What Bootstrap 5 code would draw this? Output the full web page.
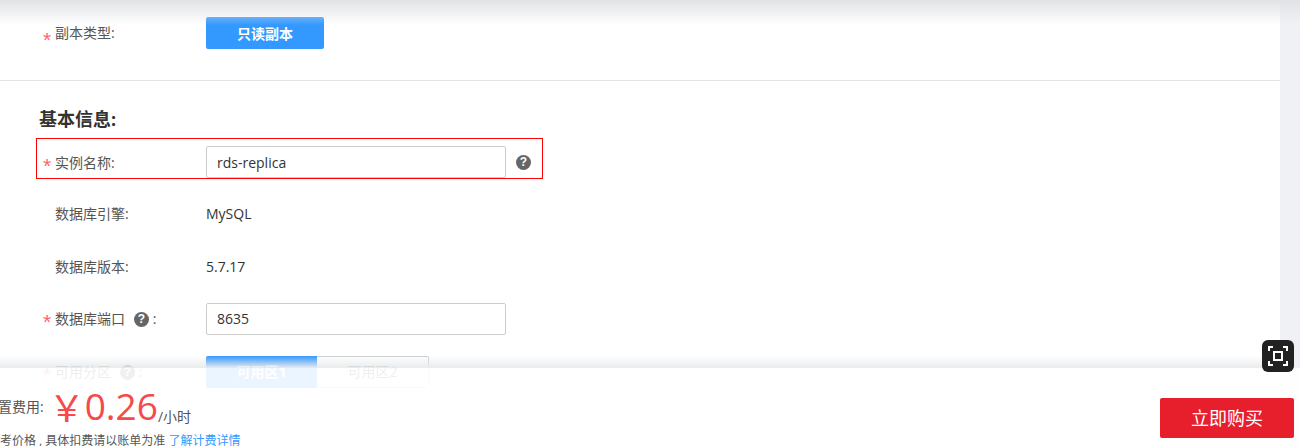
<!DOCTYPE html>
<html lang="zh-CN">

<head>
    <meta charset="UTF-8">
    <meta name="viewport" content="width=device-width, initial-scale=1.0">
    <title>只读副本</title>
    <link href="https://cdn.jsdelivr.net/npm/bootstrap@5.3.3/dist/css/bootstrap.min.css" rel="stylesheet">
    <style>
        html, body { height: 446px; overflow: hidden; }
        body { background: #f0f1f4; font-family: "Open Sans", "Noto Sans CJK SC", sans-serif; font-size: 14px; color: #555; position: relative; }
        .sheet { width: 1280px; height: 446px; background: #fff; }
        .top-fade { position: absolute; left: 0; right: 0; top: 0; height: 25px; background: linear-gradient(#e0e3e5, rgba(240, 241, 244, 0)); }
        .form-line { display: flex; align-items: center; padding-left: 43px; }
        .req { color: #f66; width: 13px; margin-right: -1px; flex: none; font: 21px/20px "Liberation Sans", sans-serif; padding-top: 7px; }
        .lbl { width: 151px; flex: none; color: #555; font-size: 14px; }
        .gap-after { margin-right: 9px; }
        .type-line { padding-top: 17px; height: 81px; align-items: flex-start; border-bottom: 1px solid #e3e3e3; }
        .type-line .req { padding-top: 13px; }
        .type-line .lbl { line-height: 32px; }
        .blue-btn { width: 118px; height: 32px; background: #39f; border: 0; border-radius: 2px; color: #fff; font-weight: 700; font-size: 14px; padding: 0; }
        .heading { font-size: 18px; font-weight: 700; color: #333; margin: 0; padding: 26px 0 0 39px; line-height: 24px; }
        .name-line { margin: 7px 0 0 36px; width: 507px; height: 41px; border: 1px solid #f00; padding: 7px 0 0 6px; }
        .txt-input { width: 300px; height: 32px; border: 1px solid #ccc; border-radius: 2px; padding: 0 10px; font-size: 14px; color: #333; background: #fff; }
        .help { width: 15px; height: 15px; border-radius: 50%; background: #666; color: #fff; font: 700 12px/15px "Liberation Sans", sans-serif; text-align: center; display: inline-block; flex: none; vertical-align: 1px; }
        .help-side { margin-left: 10px; }
        .plain-line { height: 52.8px; }
        .first-line { margin-top: 8px; }
        .val { color: #333; }
        .zone { display: flex; width: 223px; height: 32px; }
        .zone-on { width: 111px; background: #39f; color: #fff; font-weight: 700; text-align: center; line-height: 32px; border-radius: 2px 0 0 2px; }
        .zone-off { width: 112px; border: 1px solid #ccc; border-left: 0; color: #555; text-align: center; line-height: 30px; border-radius: 0 2px 2px 0; }
        .foot { position: absolute; left: 0; right: 0; top: 368px; height: 78px; background: rgba(255, 255, 255, .9); }
        .foot-fade { position: absolute; left: 0; right: 20px; top: 356px; height: 12px; background: linear-gradient(rgba(240, 241, 244, 0), #e9ebed); }
        .fee-row { position: absolute; left: -16px; top: 13px; display: flex; white-space: nowrap; }
        .fee-lbl { font-size: 14px; line-height: 20px; color: #555; padding-top: 16px; }
        .yen { font-size: 36px; line-height: 50px; color: #f44a4a; margin-left: 5px; font-family: "Noto Sans CJK SC", sans-serif; }
        .price { font-size: 37px; line-height: 50px; color: #f44a4a; }
        .per { font-size: 14px; line-height: 20px; color: #555; padding-top: 26px; }
        .note { position: absolute; left: -12px; top: 64px; font-size: 12px; line-height: 18px; color: #555; white-space: nowrap; }
        .note a { color: #39f; text-decoration: none; }
        .buy { position: absolute; left: 1160px; top: 30px; width: 134px; height: 40px; background: #e71f2d; color: #fff; border: 0; border-radius: 2px; font-size: 18px; padding: 0; }
        .shot { position: absolute; left: 1262px; top: 340px; width: 32px; height: 32px; border-radius: 6px; background: #222; display: flex; align-items: center; justify-content: center; }
    </style>
</head>

<body>
    <div class="sheet">
        <div class="form-line type-line">
            <span class="req">*</span>
            <span class="lbl">副本类型:</span>
            <button class="blue-btn" type="button">只读副本</button>
        </div>
        <h5 class="heading">基本信息:</h5>
        <div class="form-line name-line">
            <span class="req">*</span>
            <span class="lbl">实例名称:</span>
            <input class="txt-input" type="text" value="rds-replica">
            <span class="help help-side">?</span>
        </div>
        <div class="form-line plain-line first-line">
            <span class="req"></span>
            <span class="lbl">数据库引擎:</span>
            <span class="val">MySQL</span>
        </div>
        <div class="form-line plain-line">
            <span class="req"></span>
            <span class="lbl">数据库版本:</span>
            <span class="val">5.7.17</span>
        </div>
        <div class="form-line plain-line">
            <span class="req">*</span>
            <span class="lbl"><span class="gap-after">数据库端口</span><span class="help">?</span> :</span>
            <input class="txt-input" type="text" value="8635">
        </div>
        <div class="form-line plain-line">
            <span class="req">*</span>
            <span class="lbl"><span class="gap-after">可用分区</span><span class="help">?</span> :</span>
            <div class="zone">
                <div class="zone-on">可用区1</div>
                <div class="zone-off">可用区2</div>
            </div>
        </div>
    </div>
    <div class="top-fade"></div>
    <div class="foot-fade"></div>
    <div class="foot">
        <div class="fee-row">
            <span class="fee-lbl">配置费用:</span>
            <span class="yen">￥</span>
            <span class="price">0.26</span>
            <span class="per">/小时</span>
        </div>
        <div class="note">参考价格 , 具体扣费请以账单为准 <a href="#">了解计费详情</a></div>
        <button class="buy" type="button">立即购买</button>
    </div>
    <div class="shot">
        <svg width="22" height="22" viewBox="0 0 22 22" fill="none" stroke="#fff" stroke-width="2">
            <path d="M2 6V2h4M16 2h4v4M20 16v4h-4M6 20H2v-4"/>
            <rect x="7" y="7" width="8" height="8"/>
        </svg>
    </div>
    <script src="https://cdn.jsdelivr.net/npm/bootstrap@5.3.3/dist/js/bootstrap.bundle.min.js"></script>
</body>

</html>
